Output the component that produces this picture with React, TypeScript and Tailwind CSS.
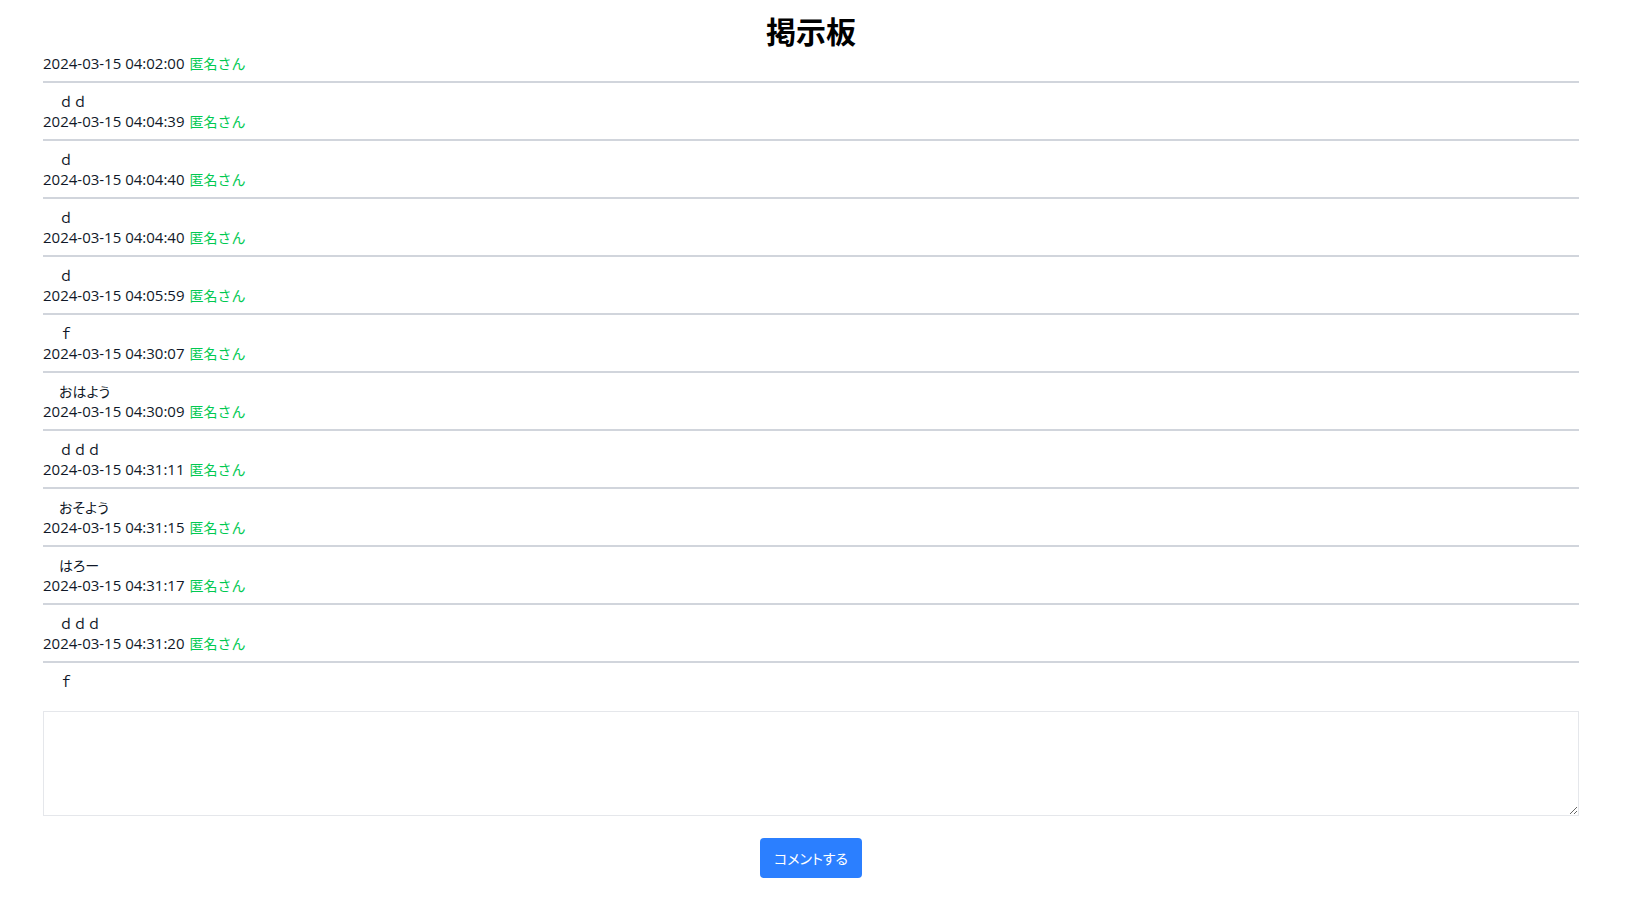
import React from "react";

const posts: { time: string; body: string }[] = [
  { time: "2024-03-15 04:02:00", body: "ｄｄ" },
  { time: "2024-03-15 04:04:39", body: "ｄ" },
  { time: "2024-03-15 04:04:40", body: "ｄ" },
  { time: "2024-03-15 04:04:40", body: "ｄ" },
  { time: "2024-03-15 04:05:59", body: "ｆ" },
  { time: "2024-03-15 04:30:07", body: "おはよう" },
  { time: "2024-03-15 04:30:09", body: "ｄｄｄ" },
  { time: "2024-03-15 04:31:11", body: "おそよう" },
  { time: "2024-03-15 04:31:15", body: "はろー" },
  { time: "2024-03-15 04:31:17", body: "ｄｄｄ" },
  { time: "2024-03-15 04:31:20", body: "ｆ" },
];

const hasKana = (s: string) => /[\u3040-\u30ff]/.test(s);

export default function App() {
  return (
    <div
      className="min-h-screen bg-white text-black"
      style={{ fontFamily: '"Noto Sans CJK JP", "Noto Sans", sans-serif' }}
    >
      <div className="ml-[43px] w-[1536px] flex flex-col">
        <h1 className="mt-[12px] mb-[5px] text-center text-3xl font-bold leading-9">掲示板</h1>
        <div className="flex flex-col">
          {posts.map((p, i) => (
            <div key={i} className="flex flex-col">
              <div className="flex items-baseline gap-[5px] border-b-2 border-gray-300 pb-2 leading-5 text-gray-900">
                <span className="font-['Open_Sans',sans-serif] text-[15px]">{p.time}</span>
                <span className="text-sm text-green-500">匿名さん</span>
              </div>
              <div
                className={
                  hasKana(p.body)
                    ? "px-4 pt-2 text-sm leading-5 text-gray-900 [font-feature-settings:'palt']"
                    : "px-4 pt-2 text-sm leading-5 text-gray-900"
                }
              >
                {p.body}
              </div>
            </div>
          ))}
        </div>
        <textarea className="mt-5 h-[105px] w-full border border-gray-200 p-2 text-sm outline-none" />
        <div className="flex justify-center mt-[22px]">
          <button className="w-[102px] h-10 rounded bg-blue-500 text-sm text-white [font-feature-settings:'palt']">
            コメントする
          </button>
        </div>
      </div>
    </div>
  );
}
